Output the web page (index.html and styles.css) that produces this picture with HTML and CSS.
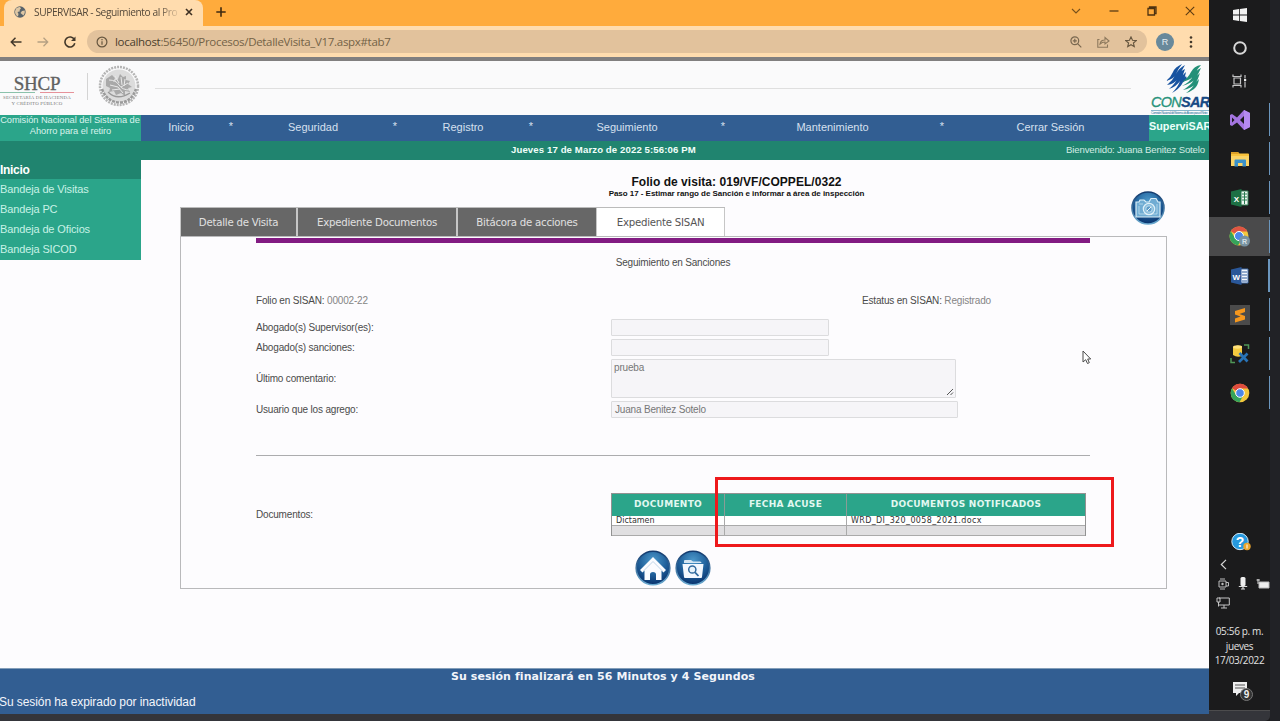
FILE: index.html
```html
<!DOCTYPE html>
<html lang="es">
<head>
<meta charset="utf-8">
<title>SUPERVISAR - Seguimiento al Proceso</title>
<link rel="stylesheet" href="styles.css">
</head>
<body>
<svg class="defs" width="0" height="0">
  <defs>
    <radialGradient id="orb" cx="50%" cy="28%" r="75%">
      <stop offset="0" stop-color="#4c98ca"/><stop offset=".5" stop-color="#23659f"/><stop offset="1" stop-color="#062d68"/>
    </radialGradient>
    <linearGradient id="rim" x1="0" y1="0" x2="0" y2="1">
      <stop offset="0" stop-color="#123a6e"/><stop offset="1" stop-color="#6aa9cf"/>
    </linearGradient>
  </defs>
</svg>
<div class="screen">
<div class="window">
  <div class="tabstrip">
    <div class="browser-tab">
      <svg width="12" height="12" viewBox="0 0 12 12"><circle cx="6" cy="6" r="5.7" fill="#59636a"/><path d="M2 2.5Q4 .8 6 1L7 2.5 5.5 4 6 5.3 3.5 6 4.5 8 4 10.5Q1 9 1 5.500ZM8 5 10.800 4.500Q11.300 7 9.500 9.500L8 8.300 6.500 7Z" fill="#dfc7a4"/></svg>
      <span class="tab-title">SUPERVISAR - Seguimiento al Pro</span>
      <svg width="8" height="8" viewBox="0 0 8 8"><path d="M1 1 7 7M7 1 1 7" stroke="#3e3022" stroke-width="1.600"/></svg>
    </div>
    <svg class="plus" width="10" height="10" viewBox="0 0 10 10"><path d="M5 .3V9.700M.3 5H9.700" stroke="#3f2a10" stroke-width="1.600"/></svg>
    <div class="win-controls">
      <svg width="10" height="10" viewBox="0 0 10 10"><path d="M1 3 5 7 9 3" fill="none" stroke="#78511c" stroke-width="1.100"/></svg>
      <svg width="10" height="10" viewBox="0 0 10 10"><path d="M.5 5H9.500" stroke="#4d3210" stroke-width="1.200"/></svg>
      <svg width="10" height="10" viewBox="0 0 10 10"><path d="M1 2.500H7.500V9H1ZM2.500 2.500V1H9V7.500H7.500" fill="none" stroke="#4d3210" stroke-width="1.300"/></svg>
      <svg width="10" height="10" viewBox="0 0 10 10"><path d="M.8 .8 9.200 9.200M9.200 .8 .8 9.200" stroke="#5c3b12" stroke-width="1.100"/></svg>
    </div>
  </div>
  <div class="toolbar">
    <div class="nav-icons">
      <svg width="12" height="10" viewBox="0 0 12 10"><path d="M11.500 5H1.500M5.500 .8 1.300 5 5.500 9.200" fill="none" stroke="#43382a" stroke-width="1.500"/></svg>
      <svg width="12" height="10" viewBox="0 0 12 10"><path d="M.5 5H10.500M6.500 .8 10.700 5 6.500 9.200" fill="none" stroke="#b5a083" stroke-width="1.300"/></svg>
      <svg width="12" height="12" viewBox="0 0 12 12"><path d="M10.400 3.700A5 5 0 1 0 10.800 7.300" fill="none" stroke="#43382a" stroke-width="1.600"/><path d="M11.500 .5V5H7Z" fill="#43382a"/></svg>
    </div>
    <div class="address">
      <svg width="12" height="12" viewBox="0 0 12 12"><circle cx="6" cy="6" r="4.900" fill="none" stroke="#66563f" stroke-width="1.200"/><path d="M6 5.300V8.700M6 3.100V4.300" stroke="#66563f" stroke-width="1.200"/></svg>
      <span class="url"><b>localhost</b>:56450/Procesos/DetalleVisita_V17.aspx#tab7</span>
      <div class="addr-icons">
        <svg width="12" height="12" viewBox="0 0 12 12"><circle cx="4.800" cy="4.800" r="3.900" fill="none" stroke="#7a6850" stroke-width="1.200"/><path d="M7.600 7.600 11.300 11.300M2.800 4.800H6.800M4.800 2.800V6.800" stroke="#7a6850" stroke-width="1.200"/></svg>
        <svg width="13" height="12" viewBox="0 0 13 12"><path d="M2.500 3.500H.8V11.200H10.500V8.500M3 8Q3.500 4 8 4V1.500L12 5 8 8V6Q5 6 3 8Z" fill="none" stroke="#8d795d" stroke-width="1.100"/></svg>
        <svg width="12" height="12" viewBox="0 0 12 12"><path d="M6 .9 7.500 4.300 11.200 4.600 8.400 7 9.300 10.700 6 8.700 2.700 10.700 3.600 7 .8 4.600 4.500 4.300Z" fill="none" stroke="#66563f" stroke-width="1.100"/></svg>
      </div>
    </div>
    <div class="avatar">R</div>
    <svg class="kebab" width="4" height="12" viewBox="0 0 4 12"><g fill="#43382a"><circle cx="2" cy="1.500" r="1.300"/><circle cx="2" cy="6" r="1.300"/><circle cx="2" cy="10.500" r="1.300"/></g></svg>
  </div>
  <header class="banner">
    <div class="shcp">
      <div class="shcp-name">SHCP</div>
      <div class="shcp-rule"><i></i><i></i></div>
      <div class="shcp-sub">SECRETARÍA DE HACIENDA<br>Y CRÉDITO PÚBLICO</div>
    </div>
    <div class="banner-sep"></div>
    <svg class="seal" width="42" height="42" viewBox="0 0 42 42">
      <circle cx="21" cy="21" r="19" fill="none" stroke="#b4b4b4" stroke-width="2.500" stroke-dasharray="2 1"/>
      <circle cx="21" cy="21" r="16.500" fill="#dcdcdc"/>
      <path d="M8 14 14 10 17 13 15 17 20 14 22 9 25 12 28 11 28 15 32 16 30 19 34 22 30 23 32 27 27 26 27 31 23 28 18 30 16 26 11 27 12 23 8 21Z" fill="#a9a9a9"/>
      <path d="M11 15Q18 15 21 20T32 25M17 11 21 18M23 12 24 20M27 14 26 21M12 20 20 22 25 28M30 18 23 22M14 25 22 24" fill="none" stroke="#e9e9e9" stroke-width="1"/>
      <path d="M4 24Q9 37 21 37.500T38 24" fill="none" stroke="#9a9a9a" stroke-width="2.500" stroke-dasharray="3 1"/>
      <path d="M10 27Q19 36 32 28" fill="none" stroke="#999" stroke-width="1.300"/>
    </svg>
    <div class="banner-line"></div>
    <div class="consar">
      <svg width="38" height="31" viewBox="0 0 38 31">
        <path d="M1 17Q6 13 8 8T17 0Q13 5 11 10T1 17ZM2 21Q8 16 11 10T20 1Q16 8 13 14T2 21ZM4 25Q11 19 13 13T20 5Q18 12 15 17T4 25ZM7 29Q13 23 15 17T21 8Q20 15 17 20T7 29ZM14 20 21 12 22 15 15 21Z" fill="#1753a0"/>
        <path d="M17 18Q23 14 26 8T36 1Q32 5 30 10T17 18ZM17 22Q25 18 28 12T36 4Q33 11 30 15T17 22ZM18 26Q26 21 29 16T35 9Q33 16 30 20T18 26ZM21 29Q28 24 30 19L34 15Q33 22 29 25T21 29Z" fill="#239078"/>
      </svg>
      <div class="consar-name"><span>CON</span>SAR</div>
      <div class="consar-sub">Comisión Nacional del Sistema de Ahorro para el Retiro</div>
    </div>
  </header>
  <nav class="menu">
    <div class="org">Comisión Nacional del Sistema de<br>Ahorro para el retiro</div>
    <a>Inicio</a><i>*</i><a>Seguridad</a><i>*</i><a>Registro</a><i>*</i><a>Seguimiento</a><i>*</i><a>Mantenimiento</a><i>*</i><a>Cerrar Sesión</a>
    <div class="brand">SuperviSAR</div>
  </nav>
  <div class="datebar">
    <b>Jueves 17 de Marzo de 2022 5:56:06 PM</b>
    <span>Bienvenido: Juana Benitez Sotelo</span>
  </div>
  <div class="body">
    <aside class="sidebar">
      <h2>Inicio</h2>
      <a>Bandeja de Visitas</a><a>Bandeja PC</a><a>Bandeja de Oficios</a><a>Bandeja SICOD</a>
    </aside>
    <main class="main">
      <div class="heading">
        <h1>Folio de visita: 019/VF/COPPEL/0322</h1>
        <p>Paso 17 - Estimar rango de Sanción e informar a área de inspección</p>
      </div>
      <div class="tabs-row">
        <div class="tabs">
          <div class="tab t1"><span>Detalle de Visita</span></div>
          <div class="tab t2"><span>Expediente Documentos</span></div>
          <div class="tab t3"><span>Bitácora de acciones</span></div>
          <div class="tab t4 active"><span>Expediente SISAN</span></div>
        </div>
        <svg class="camera" width="34" height="34" viewBox="0 0 34 34">
          <circle cx="17" cy="17" r="16" fill="url(#orb)" stroke="url(#rim)" stroke-width="1.600"/>
          <path d="M5 11H8L9 9H13L15 11H18L20 7.500H25L27 11H29V26H5Z" fill="#70acd3" stroke="#d9edf7" stroke-width="1.200"/>
          <path d="M8 13H12M26 13V23H8V15" fill="none" stroke="#c1dff0" stroke-width=".8"/>
          <circle cx="18" cy="18" r="5.700" fill="#87bddd" stroke="#e0f0f8" stroke-width="1.200"/><circle cx="18" cy="18" r="3.200" fill="#5d9bc7" stroke="#d3e8f4" stroke-width=".8"/><path d="M16 20 20 16" stroke="#e9f5fb"/>
        </svg>
      </div>
      <section class="panel">
        <div class="purple"></div>
        <h3>Seguimiento en Sanciones</h3>
        <div class="status"><div>Folio en SISAN: <em>00002-22</em></div><div>Estatus en SISAN: <em>Registrado</em></div></div>
        <div class="form">
          <label>Abogado(s) Supervisor(es):</label><div class="field short"></div>
          <label>Abogado(s) sanciones:</label><div class="field short"></div>
          <label>Último comentario:</label><div class="field area">prueba<svg width="8" height="8" viewBox="0 0 8 8"><path d="M1 7 7 1M4.500 7 7 4.500" stroke="#555" stroke-width="1"/></svg></div>
          <label>Usuario que los agrego:</label><div class="field user">Juana Benitez Sotelo</div>
        </div>
        <div class="rule"></div>
        <div class="docs">
          <label>Documentos:</label>
          <div class="table">
            <div class="th"><span>DOCUMENTO</span></div><div class="th"><span>FECHA ACUSE</span></div><div class="th"><span>DOCUMENTOS NOTIFICADOS</span></div>
            <div class="td">Dictamen</div><div class="td"></div><div class="td file">WRD_DI_320_0058_2021.docx</div>
            <div class="td alt"></div><div class="td alt"></div><div class="td alt"></div>
          </div>
        </div>
        <div class="actions">
          <svg width="36" height="36" viewBox="0 0 36 36"><circle cx="18" cy="18" r="16.800" fill="url(#orb)" stroke="url(#rim)" stroke-width="1.600"/><path d="M18 7 31 20 28.500 22.500 26.500 20.500V30H21V24.500Q21 22 18 22T15 24.500V30H9.500V20.500L7.500 22.500 5 20Z" fill="#fbfcff"/><path d="M8.500 21 18 11.500 27.500 21" fill="none" stroke="#b9cfe4" stroke-width=".9"/></svg>
          <svg width="36" height="36" viewBox="0 0 36 36"><circle cx="18" cy="18" r="16.800" fill="url(#orb)" stroke="url(#rim)" stroke-width="1.600"/><path d="M9 13V11Q9 10 10 10H16L18 11.500H25Q26.500 11.500 26.500 13Z" fill="#d4e6f3"/><path d="M7.500 14H28.500L27 27Q27 28 26 28H10Q9 28 9 27Z" fill="#f4f9ff"/><circle cx="17.300" cy="19.500" r="3.600" fill="#e9f4fb" stroke="#326b9f" stroke-width="1.500"/><path d="M20 22.300 23.500 26" stroke="#326b9f" stroke-width="1.800"/></svg>
        </div>
      </section>
    </main>
  </div>
  <footer class="footer">
    <b>Su sesión finalizará en 56 Minutos y 4 Segundos</b>
    <span>Su sesión ha expirado por inactividad</span>
  </footer>
  <div class="edge"></div>
</div>
<aside class="taskbar">
  <div class="slot s-win"><svg width="14" height="14" viewBox="0 0 14 14"><path d="M0 2 6 1.100V6.600H0ZM6.800 1 14 0V6.600H6.800ZM0 7.400H6V12.900L0 12ZM6.800 7.400H14V14L6.800 13Z" fill="#f1f1f1"/></svg></div>
  <div class="slot s-cor"><svg width="14" height="14" viewBox="0 0 14 14"><circle cx="7" cy="7" r="5.800" fill="none" stroke="#d8d8d8" stroke-width="2"/></svg></div>
  <div class="slot s-view"><svg width="15" height="14" viewBox="0 0 15 14"><path d="M1 .5V2.500H9V.5M1 13.500V11.500H9V13.500M2 4H8.500V10H2ZM13 1V4.500M13 7.500V13.500" fill="none" stroke="#c4c4c4" stroke-width="1.200"/><path d="M12 5H14.200V7H12Z" fill="#eee"/></svg></div>
  <div class="slot app"><svg width="22" height="20" viewBox="0 0 22 20"><path d="M15 0 21 3V17L15 20 8 12.500 3 16 1 15V5L3 4 8 7.500ZM15 6 11 10 15 14ZM3 7.500V12.500L5.500 10Z" fill="#a475df" fill-rule="evenodd"/><path d="M15 0 21 3V17L15 20Z" fill="#b58af0"/></svg></div>
  <div class="slot app"><svg width="20" height="16" viewBox="0 0 20 16"><path d="M1 1H8L9.500 2.500H18Q19 2.500 19 3.500V15H1Z" fill="#f9c33c"/><path d="M1 1H8L9 3H1Z" fill="#dca027"/><path d="M1 5H19V15H1Z" fill="#fbd466"/><path d="M4.500 15.500V9.500Q4.500 8.500 5.500 8.500H15Q16 8.500 16 9.500V15.500H12.500V12H8V15.500Z" fill="#3a91c9"/></svg></div>
  <div class="slot app"><svg width="20" height="18" viewBox="0 0 20 18"><path d="M11 2H18V16H11" fill="#edf6f0" stroke="#337f55"/><path d="M12 5H17M12 8H17M12 11H17M14.500 3V15" stroke="#297b50"/><path d="M1 2.500 11.500 0V18L1 15.500Z" fill="#1d7044"/><text x="6.300" y="13" class="office">X</text></svg></div>
  <div class="slot app current"><svg width="22" height="22" viewBox="0 0 22 22"><circle cx="10" cy="10" r="9.500" fill="#f3c83c"/><path d="M10 10 1.800 5.200A9.500 9.500 0 0 1 18.300 5.500H10Z" fill="#df5543"/><path d="M1.800 5.200A9.500 9.500 0 0 0 9 19.500L13 12 6 12Z" fill="#35a45b"/><circle cx="10" cy="10" r="4.500" fill="#4c88e8" stroke="#fff"/><circle cx="15.500" cy="15" r="5.500" fill="#7892a1"/><text x="15.500" y="17.700" class="tiny">R</text></svg></div>
  <div class="slot app word"><svg width="20" height="18" viewBox="0 0 20 18"><path d="M11 2H18V16H11" fill="#f4f8fc" stroke="#3f6ba8"/><path d="M12 5H17M12 8H17M12 11H17M12 14H17" stroke="#315c9e"/><path d="M1 2.500 11.500 0V18L1 15.500Z" fill="#2a5799"/><text x="6.300" y="12.500" class="office">W</text></svg></div>
  <div class="slot app"><svg width="20" height="20" viewBox="0 0 20 20"><path d="M0 0H20V20H0Z" fill="#4b4b4b"/><path d="M15 3V7L9.500 9 15 11V14.500L5 17.500V13.500L10.500 11.500 5 9.500V6Z" fill="#f6981e"/></svg></div>
  <div class="slot app"><svg width="20" height="20" viewBox="0 0 20 20"><path d="M3 3Q7 .5 12 2V12Q7 14 3 11Z" fill="#f3ca3f"/><ellipse cx="7.500" cy="3" rx="4.500" ry="1.700" fill="#ffe17b"/><path d="M14 1H18.500V5M1 14V18.500H5" fill="none" stroke="#4f9657" stroke-width="1.500"/><path d="M9.500 9 17.500 17.500M17.500 9.500 9 18" stroke="#2873b6" stroke-width="2.700"/></svg></div>
  <div class="slot app"><svg width="20" height="20" viewBox="0 0 20 20"><circle cx="10" cy="10" r="9.300" fill="#f3c83c"/><path d="M10 10 2 5.200A9.300 9.300 0 0 1 18.100 5.500H10Z" fill="#df4c3e"/><path d="M2 5.200A9.300 9.300 0 0 0 9.500 19.300L13.500 12 6 12Z" fill="#35a45b"/><circle cx="10" cy="10" r="4.300" fill="#4c88e8" stroke="#fff"/></svg></div>
  <div class="tray">
    <svg class="help" width="20" height="18" viewBox="0 0 20 18"><circle cx="9" cy="8.500" r="8.200" fill="#2699de" stroke="#d4ebf8"/><text x="9" y="13.500" class="question">?</text><circle cx="16" cy="13.500" r="3.700" fill="#eba52d"/><path d="M16 11.500V15.500" stroke="#fff"/></svg>
    <svg class="chev" width="7" height="11" viewBox="0 0 7 11"><path d="M6 .8 1.300 5.500 6 10.200" fill="none" stroke="#d8d8d8" stroke-width="1.200"/></svg>
    <div class="tray-icons">
      <svg width="12" height="12" viewBox="0 0 12 12"><path d="M1 3H8V9H1ZM8 4.500H10.500V8H8M2 1H7M2 11H7" fill="none" stroke="#bdbdbd"/><circle cx="4.500" cy="6" r="1.200" fill="#bdbdbd"/></svg>
      <svg width="10" height="13" viewBox="0 0 10 13"><rect x="2.500" y="0" width="5" height="9" rx="1.500" fill="#eee"/><path d="M.8 9.500H9.200M5 9V12M3 12H7" stroke="#ddd" stroke-width="1.200"/></svg>
      <svg width="14" height="10" viewBox="0 0 14 10"><path d="M3 3H13V9H3Z" fill="#eee" stroke="#bbb"/><path d="M.5 1H4M2 0V5" stroke="#ddd"/></svg>
    </div>
    <svg class="screen-ico" width="14" height="12" viewBox="0 0 14 12"><path d="M3 1H13.300V8H3M8 8V11M5 11H11M1 1V5H4V1ZM2.500 5V9.500" fill="none" stroke="#c4c4c4"/></svg>
    <div class="clock">05:56 p. m.<br>jueves<br>17/03/2022</div>
    <svg class="notes" width="22" height="21" viewBox="0 0 22 21"><path d="M1 1H15V12H7L4 15V12H1Z" fill="#eee"/><path d="M3 4H13M3 7H13" stroke="#555"/><circle cx="14.500" cy="13.500" r="6" fill="#333" stroke="#777"/><text x="14.500" y="17.200" class="nine">9</text></svg>
  </div>
  <div class="edge task-edge"></div>
</aside>
<div class="margin"></div>
<div class="highlight"></div>
<svg class="cursor" width="10" height="15" viewBox="0 0 10 15"><path d="M1 1V12L3.700 9.700 5.500 13.500 7.300 12.700 5.700 9H8.700Z" fill="#fff" stroke="#4a4a4a"/></svg>
</div>
</body>
</html>
```
FILE: styles.css
```css
* { box-sizing: border-box; }
body { margin: 0; background: #212226; font-family: "Liberation Sans", Arial, sans-serif; }
.defs { position: absolute; }
h1, h2, h3, p { margin: 0; }
svg { display: block; flex: none; }
i, em { font-style: normal; }
.screen { position: relative; display: flex; width: 1280px; height: 721px; overflow: hidden; }
.window { display: flex; flex-direction: column; width: 1209px; background: #fdfcfe; overflow: hidden; }
.window > * { flex: none; white-space: nowrap; }

.tabstrip { display: flex; align-items: center; height: 26px; background: #ffab3c; }
.browser-tab { display: flex; align-items: center; align-self: stretch; width: 199px; margin-left: 4px; padding: 0 10px 2px; border-radius: 8px 8px 0 0; background: #ffdcae; color: #54483a; font: 10.200px "Open Sans", sans-serif; }
.tab-title { width: 146px; margin: 0 7px 0 8px; letter-spacing: -.42px; -webkit-mask-image: linear-gradient(90deg, #000 86%, rgba(0,0,0,.15)); mask-image: linear-gradient(90deg, #000 86%, rgba(0,0,0,.15)); }
.plus { margin: 0 0 2px 13px; }
.win-controls { display: flex; gap: 28px; margin: 0 14px 5px auto; }
.toolbar { display: flex; align-items: center; height: 31px; background: #ffdcae; }
.nav-icons { display: flex; align-items: center; gap: 15px; width: 87px; padding-left: 10px; }
.address { display: flex; align-items: center; width: 1060px; height: 23px; padding: 0 10px 0 9px; border-radius: 12px; background: #e2c29c; }
.url { margin-left: 7px; color: #746247; font: 11.500px "Open Sans", sans-serif; letter-spacing: -.31px; }
.url b { color: #4b3e2d; font-weight: 400; }
.addr-icons { display: flex; gap: 15px; margin-left: auto; }
.avatar { width: 18px; height: 18px; margin-left: 9px; border-radius: 50%; background: #69899b; color: #e7eef2; font-size: 9px; line-height: 18px; text-align: center; }
.kebab { margin-left: 15px; }

.banner { display: flex; height: 58px; border-top: 4px solid #817f7f; background: #fafafb; }
.shcp { width: 74px; padding-top: 14px; text-align: center; font-family: "Liberation Serif", serif; }
.shcp-name { height: 17px; color: #616161; font-size: 19px; line-height: 18px; letter-spacing: -.2px; -webkit-text-stroke: .3px #616161; }
.shcp-rule { display: flex; gap: 5px; height: 1px; }
.shcp-rule i { flex: 1; background: #8bc2ab; }
.shcp-rule i + i { background: #e6929a; }
.shcp-sub { padding-top: 2px; color: #777; font-size: 4.900px; line-height: 6px; letter-spacing: .18px; }
.banner-sep { width: 1px; height: 27px; margin: 12px 10px 0 13px; background: #d4d4d4; }
.seal { margin-top: 4px; }
.banner-line { width: 976px; height: 1px; margin: 27px 20px 0 15px; background: #dfdfdf; }
.consar { width: 58px; }
.consar svg { margin: 3px 0 0 14px; }
.consar-name { height: 15px; color: #174984; font-size: 14.500px; font-style: italic; font-weight: 700; line-height: 15px; letter-spacing: -.75px; -webkit-text-stroke: .3px #174984; }
.consar-name span { color: #27937b; font-weight: 400; -webkit-text-stroke: .3px #27937b; }
.consar-sub { border-top: 1px solid #87b6cc; color: #2f78a0; font-size: 3.200px; line-height: 4px; letter-spacing: -.42px; }

.menu { display: grid; grid-template-columns: 141px 80px 20px 144px 20px 116px 20px 172px 20px 199px 20px 197px 60px; height: 26px; background: #325e92; color: #d6e0ef; font-size: 11px; line-height: 25px; text-align: center; }
.menu i { line-height: 22px; }
.org { background: #2ba58a; color: #d8f3ec; font-size: 9.300px; line-height: 10.500px; letter-spacing: -.06px; text-indent: -1px; }
.brand { background: #2ba58a; color: #ecfffa; font-size: 10.800px; font-weight: 700; line-height: 23px; text-align: left; }
.datebar { display: grid; grid-template-columns: 1fr 185px; height: 19px; padding-right: 4px; background: #20846f; color: #d2ece4; font-size: 9.600px; line-height: 18px; }
.datebar b { padding-left: 511px; color: #f1fffa; letter-spacing: .11px; }
.datebar span { text-align: right; letter-spacing: -.14px; }

.body { display: flex; align-items: flex-start; height: 508px; }
.sidebar { display: flex; flex-direction: column; width: 141px; height: 100px; background: #2ba58a; }
.sidebar h2 { height: 19px; color: #fff; background: #20846f; font-size: 12px; line-height: 21px; letter-spacing: -.3px; }
.sidebar a { height: 20px; color: #c8f2e6; font-size: 11px; line-height: 20px; letter-spacing: -.13px; }
.main { width: 987px; margin-left: 39px; }
.heading { height: 47px; padding: 15px 0 0 126px; text-align: center; color: #111; }
.heading h1 { font-size: 12px; line-height: 14px; letter-spacing: .04px; }
.heading p { font-size: 8px; font-weight: 700; line-height: 10px; letter-spacing: -.04px; }
.tabs-row { display: flex; justify-content: space-between; height: 29px; }
.tabs { display: flex; border-top: 1px solid #bbb; }
.tab { border: solid #c6c6c6; border-width: 0 0 0 1px; background: #676767; color: #e0e0e0; font: 10.200px/29px "DejaVu Sans", sans-serif; letter-spacing: -.24px; text-align: center; }
.t1 { width: 116px; }
.t2 { width: 160px; border-left-width: 2px; }
.t3 { width: 140px; border-left-width: 2px; }
.t4 { width: 129px; border-right-width: 1px; }
.tab.active { background: #fff; color: #555; }
.camera { margin: -16px 2px 0 0; }
.panel { height: 353px; padding-left: 75px; border: 1px solid #b9b9bb; color: #4b4b4b; font-size: 10px; letter-spacing: -.18px; }
.purple { width: 834px; height: 5px; margin-top: 1px; background: #821b82; }
.panel h3 { width: 834px; height: 40px; text-align: center; font-size: 10px; font-weight: 400; line-height: 40px; }
.status { display: grid; grid-template-columns: 606px 1fr; height: 34px; line-height: 36px; }
.status em { color: #858585; }
.form { display: grid; grid-template-columns: 355px 1fr; grid-template-rows: 20px 20px 42px 20px; }
.form label { align-self: center; }
.field { align-self: center; height: 17px; padding: 0 3px; border: 1px solid #dcdcde; border-radius: 1px; background: #f6f5f8; color: #777; line-height: 15px; }
.short { width: 218px; }
.area { position: relative; width: 345px; height: 39px; padding-left: 2px; line-height: 16px; }
.area svg { position: absolute; right: 1px; bottom: 1px; }
.user { width: 347px; }
.rule { width: 834px; height: 1px; margin-top: 36px; background: #acacae; }
.docs { display: grid; grid-template-columns: 355px 475px; align-items: center; margin-top: 37px; }
.table { display: grid; grid-template-columns: 113px 122px 238px; grid-template-rows: 22px 10px 10px; border: 1px solid #929292; border-width: 1px 1px 0 1px; font-family: "DejaVu Sans", sans-serif; }
.th { border-right: 1px solid #8a9c96; background: #2ba58a; color: #e2f8f1; font-size: 9px; font-weight: 700; line-height: 21px; letter-spacing: .28px; text-align: center; }
.td { padding-left: 4px; border: solid #aaa; border-width: 0 1px 1px 0; background: #fff; color: #333; font-size: 8px; line-height: 10px; letter-spacing: 0; }
.td.file { letter-spacing: .36px; }
.td.alt { background: #e0dfe1; }
.table > :nth-child(3n) { border-right: 0; }
.actions { display: flex; gap: 4px; margin: 14px 0 0 379px; }

.footer { display: flex; flex-direction: column; height: 46px; border-top: 1px solid #849eb9; background: #325e92; color: #f2f5fb; }
.footer b { padding-left: 451px; font: 700 11px/15px "DejaVu Sans", sans-serif; letter-spacing: .08px; }
.footer span { margin-left: -1px; padding-top: 9px; font-size: 12px; line-height: 18px; letter-spacing: -.08px; }
.edge { height: 7px; background: #34353a; }

.taskbar { display: flex; flex-direction: column; width: 61px; background: #1b1b1c; }
.slot { display: flex; align-items: center; justify-content: center; flex: none; }
.s-win { height: 30px; }
.s-cor { height: 36px; }
.s-view { height: 31px; padding-bottom: 1px; }
.s-view + .app { margin-top: 3px; }
.app { position: relative; height: 39px; }
.app::after { content: ""; position: absolute; right: 0; top: 3px; width: 1px; height: 33px; background: #6b96bd; }
.current { background: #4a4a4b; }
.word::after { width: 2px; }
.office { fill: #fff; font: 700 8px "Liberation Sans", sans-serif; text-anchor: middle; }
.tiny { fill: #d7e1e7; font: 700 7px "Liberation Sans", sans-serif; text-anchor: middle; }
.question { fill: #fff; font: 700 14px "Liberation Sans", sans-serif; text-anchor: middle; }
.nine { fill: #eee; font: 700 10px "Liberation Sans", sans-serif; text-anchor: middle; }
.tray { display: flex; flex-direction: column; flex: 1; padding-top: 121px; }
.help { margin-left: 22px; }
.chev { margin: 8px 0 0 11px; }
.tray-icons { display: flex; align-items: center; gap: 8px; margin: 7px 0 0 9px; }
.screen-ico { margin: 7px 0 0 7px; }
.clock { margin-top: 15px; color: #e2e2e2; font: 10px/14.700px "Open Sans", sans-serif; letter-spacing: -.35px; text-align: center; }
.notes { margin: 13px 0 0 23px; }
.task-edge { height: 11px; border-top: 1px solid #4c4c4d; border-radius: 0 0 5px 0; }
.margin { width: 10px; background: #212226; }
.highlight { position: absolute; left: 715px; top: 477px; width: 399px; height: 70px; border: 3px solid #ee191c; }
.cursor { position: absolute; left: 1082px; top: 350px; }
```
